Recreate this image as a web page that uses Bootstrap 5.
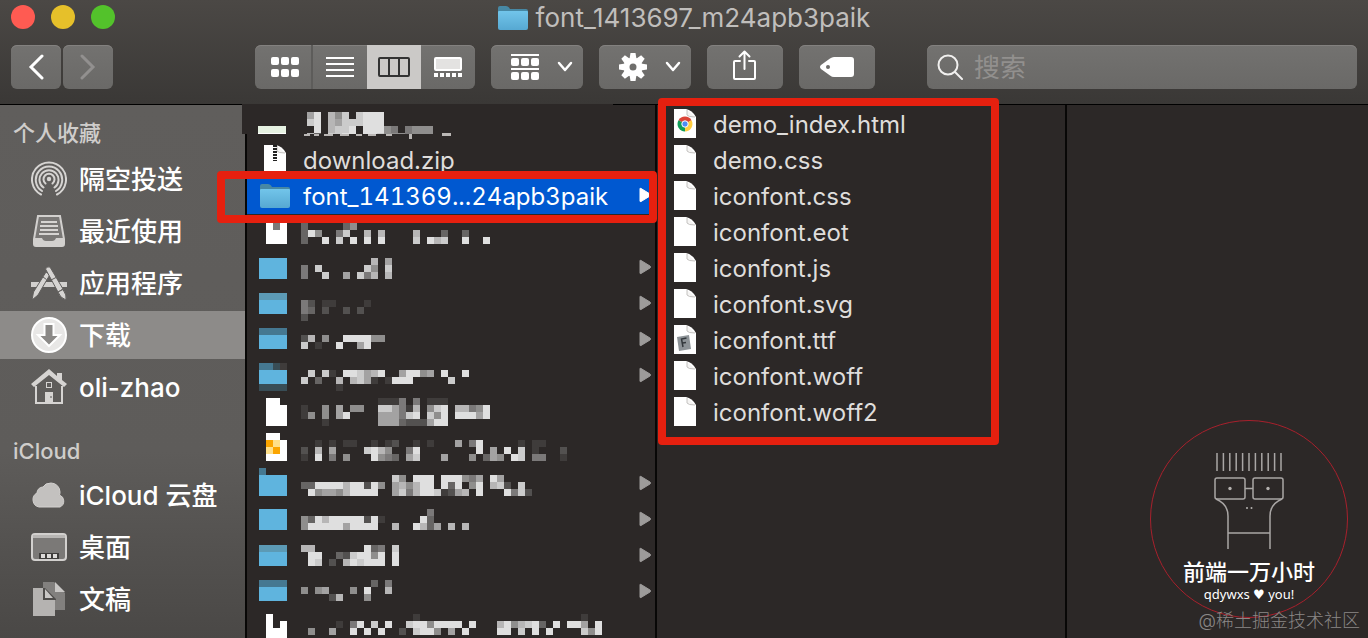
<!DOCTYPE html>
<html lang="zh-CN">
<head>
<meta charset="utf-8">
<meta name="viewport" content="width=device-width, initial-scale=1">
<title>font_1413697_m24apb3paik</title>
<link href="https://cdn.jsdelivr.net/npm/bootstrap@5.3.0/dist/css/bootstrap.min.css" rel="stylesheet">
<style>
  :root { --pane: #2c2827; --ink: #dfdddb; --mark-red: #e6200f; }
  body { font-family: Inter, "Noto Sans CJK SC", sans-serif; background: var(--pane); color: var(--ink); font-size: 24px; line-height: 36px; }
  svg { display: block; flex: none; }
  .chrome { background: linear-gradient(#4b4845, #3a3836); border-bottom: 1px solid #000; height: 105px; flex: none; padding: 0 11px; }
  .title-row { display: grid; grid-template-columns: 1fr auto 1fr; height: 35px; margin-bottom: 10px; }
  .lights { display: flex; gap: 16px; padding-top: 5px; }
  .light-dot { width: 24px; height: 24px; border-radius: 50%; border: 0; padding: 0; }
  .window-name { color: #c0bebc; font-size: 26px; font-weight: 400; margin: 0; line-height: 36px; }
  .tool { height: 44px; flex: none; border: 0; border-radius: 6px; padding: 0; color: #fff; background: linear-gradient(#737270, #6a6967); box-shadow: inset 0 1px #83817f; display: flex; align-items: center; justify-content: center; }
  .tool-nav { width: 50px; }
  .tool-menu { width: 92px; gap: 18px; padding-left: 10px; }
  .tool-wide { width: 76px; }
  .views { display: grid; grid-template-columns: 58px 1fr 1fr 1fr; width: 220px; margin-left: 126px; overflow: hidden; }
  .views button { height: 44px; border: 0; background: none; color: #fff; padding: 0; display: flex; align-items: center; justify-content: center; }
  .views button:first-child { border-right: 2px solid #5d5c5a; padding-left: 3px; }
  .views .chosen { background: #cbc9c7; color: #333; }
  .finder-search { flex: 1; min-width: 0; margin-left: 36px; padding: 0 10px; justify-content: flex-start; gap: 11px; }
  .finder-search input { background: none; border: 0; outline: 0; color: #fff; font-size: 26px; line-height: 36px; padding: 2px 0 0; width: 0; }
  .finder-search input::placeholder { color: #92908e; opacity: 1; }
  .side { width: 247px; flex: none; background: linear-gradient(#605e5c 0, #5e5c5a 65%, #4a4846 100%); border-right: 2px solid #080706; font-weight: 500; }
  .side h2 { font-size: 22px; line-height: 32px; font-weight: 500; color: #cfcdcb; margin: 0; padding: 12px 13px 4px; }
  .side ul + h2 { padding-top: 20px; padding-bottom: 2px; }
  .side a { display: flex; align-items: center; gap: 12px; height: 48px; margin: 2px 0 4px; padding-left: 31px; color: #fff; text-decoration: none; font-size: 26px; line-height: 48px; white-space: nowrap; }
  .side a span { padding-top: 2px; }
  .side .picked { background: #8d8b89; }
  .browse-col { width: 410px; flex: none; border-right: 2px solid #080706; padding-top: 1px; }
  .file-row { display: flex; align-items: center; height: 36px; position: relative; white-space: nowrap; color: inherit; text-decoration: none; padding-left: 12px; }
  .doc-icon { margin: 0 16px 2px 5px; }
  .folder-icon { margin: 0 13px 0 1px; }
  .row-name { flex: 1; padding-top: 2px; }
  .sel-row { background: #0058d0; color: #fff; font-variant-numeric: tabular-nums; }
  .arrow { color: #9d9b9a; margin: 0 4px 2px 0; }
  .sel-row .arrow { color: #fff; }
  .outline-mark { position: absolute; border: 8px solid var(--mark-red); border-radius: 4px; z-index: 5; pointer-events: none; }
  .mark-row { inset: -7px -2px -9px -30px; }
  .mark-list { inset: -8px 66px -15px 1px; }
  .cover { position: absolute; left: 242px; top: 104px; width: 371px; height: 30px; background: var(--pane); z-index: 1; }
  .cover svg { margin-left: 16px; }
  .emblem { position: absolute; right: 20px; bottom: 20px; width: 198px; height: 198px; border: 1px solid #a8202c; border-radius: 50%; text-align: center; color: #fff; padding-top: 31px; }
  .emblem svg { margin: 0 auto 6px; }
  .emblem-name { font-size: 22px; line-height: 28px; font-weight: 500; font-family: "Noto Sans CJK SC", sans-serif; }
  .emblem-sub { font-size: 13px; line-height: 20px; font-family: "Noto Sans", "DejaVu Sans", sans-serif; }
  .credit { position: absolute; right: 8px; bottom: 5px; font-size: 18px; line-height: 24px; font-weight: 300; color: #8a8786; white-space: nowrap; }
</style>
</head>
<body>
<svg width="0" height="0" class="position-absolute" aria-hidden="true">
  <defs>
    <linearGradient id="blue" x1="0" y1="0" x2="0" y2="1"><stop offset="0" stop-color="#72c5ea"/><stop offset="1" stop-color="#56a8d2"/></linearGradient>
    <symbol id="folder" viewBox="0 0 30 24"><path d="M0 22V2Q0 0 2 0H8Q10 0 11 1.500L12 3H28Q30 3 30 5V22Z" fill="#4788a4"/><path d="M0 6Q0 5 1 5H29Q30 5 30 6V22Q30 24 28 24H2Q0 24 0 22Z" fill="url(#blue)"/></symbol>
    <symbol id="page" viewBox="0 0 22 29"><path d="M0 0H12Q18 1 22 8V29H0Z" fill="#fff"/><path d="M13 1V6Q14 8 21 8" fill="#f5f4f3" stroke="#c4c2c0" stroke-width="1"/></symbol>
    <symbol id="arrow" viewBox="0 0 12 16"><path d="M1 1.500Q1 1 2 1.500L11 7Q12 8 11 9L2 14.500Q1 15 1 14Z" fill="currentColor" stroke="currentColor"/></symbol>
    <symbol id="chev" viewBox="0 0 16 12"><path d="M2 2L8 9L14 2" fill="none" stroke="currentColor" stroke-width="2.500" stroke-linecap="round" stroke-linejoin="round"/></symbol>
  </defs>
</svg>

<div class="d-flex flex-column vh-100 overflow-hidden position-relative">
  <header class="chrome">
    <div class="title-row">
      <div class="lights">
        <button class="light-dot" style="background:#ff5b52" aria-label="关闭"></button>
        <button class="light-dot" style="background:#e6c02a" aria-label="最小化"></button>
        <button class="light-dot" style="background:#53c22b" aria-label="缩放"></button>
      </div>
      <div class="d-flex align-items-center gap-2">
        <svg width="30" height="24"><use href="#folder"/></svg>
        <h1 class="window-name">font_1413697_m24apb3paik</h1>
      </div>
      <div></div>
    </div>
    <div class="d-flex gap-3">
      <div class="d-flex" style="gap:2px">
        <button class="tool tool-nav" aria-label="后退"><svg width="16" height="26" viewBox="0 0 16 26" fill="none" stroke="#fff" stroke-width="3" stroke-linecap="round"><path d="M14 2L3 13L14 24"/></svg></button>
        <button class="tool tool-nav" aria-label="前进"><svg width="16" height="26" viewBox="0 0 16 26" fill="none" stroke="#92908f" stroke-width="3" stroke-linecap="round"><path d="M2 2L13 13L2 24"/></svg></button>
      </div>
      <div class="tool views">
        <button aria-label="图标"><svg width="28" height="20" viewBox="0 0 28 20" fill="currentColor"><rect width="8" height="8" rx="2"/><rect x="10" width="8" height="8" rx="2"/><rect x="20" width="8" height="8" rx="2"/><rect y="12" width="8" height="8" rx="2"/><rect x="10" y="12" width="8" height="8" rx="2"/><rect x="20" y="12" width="8" height="8" rx="2"/></svg></button>
        <button aria-label="列表"><svg width="28" height="20" viewBox="0 0 28 20" fill="currentColor"><path d="M0 0H28V2H0ZM0 6H28V8H0ZM0 12H28V14H0ZM0 18H28V20H0Z"/></svg></button>
        <button class="chosen" aria-label="分栏"><svg width="32" height="20" viewBox="0 0 32 20" fill="none" stroke="currentColor" stroke-width="2"><rect x="1" y="1" width="30" height="18" rx="1"/><path d="M11 1V19M21 1V19"/></svg></button>
        <button aria-label="画廊"><svg width="28" height="20" viewBox="0 0 28 20"><rect x="1" y="1" width="26" height="12" rx="1" fill="#e3e2e1" stroke="#fff" stroke-width="2"/><path d="M0 16H4V20H0ZM6 16H10V20H6ZM12 16H16V20H12ZM18 16H22V20H18ZM24 16H28V20H24Z" fill="#fff"/></svg></button>
      </div>
      <button class="tool tool-menu" aria-label="分组"><svg width="28" height="26" viewBox="0 0 28 26" fill="#fff"><path d="M0 0H28V2H0ZM0 14H28V16H0Z"/><rect y="4" width="8" height="8" rx="2"/><rect x="10" y="4" width="8" height="8" rx="2"/><rect x="20" y="4" width="8" height="8" rx="2"/><rect y="18" width="8" height="8" rx="2"/><rect x="10" y="18" width="8" height="8" rx="2"/><rect x="20" y="18" width="8" height="8" rx="2"/></svg><svg width="16" height="12"><use href="#chev"/></svg></button>
      <button class="tool tool-menu" aria-label="操作"><svg width="28" height="28" viewBox="-14 -14 28 28"><g fill="#fff"><path id="cog" d="M-2.500 -14H2.500L3.500 -8H-3.500Z"/><use href="#cog" transform="rotate(45)"/><use href="#cog" transform="rotate(90)"/><use href="#cog" transform="rotate(135)"/><use href="#cog" transform="rotate(180)"/><use href="#cog" transform="rotate(225)"/><use href="#cog" transform="rotate(270)"/><use href="#cog" transform="rotate(315)"/></g><circle r="6.500" fill="none" stroke="#fff" stroke-width="6"/></svg><svg width="16" height="12"><use href="#chev"/></svg></button>
      <button class="tool tool-wide" aria-label="共享"><svg class="mb-1" width="24" height="30" viewBox="0 0 24 30" fill="none" stroke="#fff" stroke-width="2" stroke-linecap="round" stroke-linejoin="round"><path d="M7 11H2Q1 11 1 12V28Q1 29 2 29H21Q22 29 22 28V12Q22 11 21 11H16M11.500 19V1.500M6.500 6.500L11.500 1.500L16.500 6.500"/></svg></button>
      <button class="tool tool-wide" aria-label="标记"><svg width="34" height="20" viewBox="0 0 34 20"><path d="M10 1.500Q12 0 14 0H31Q34 0 34 3V17Q34 20 31 20H14Q12 20 10 18.500L1 12Q-1 10 1 8Z" fill="#fff"/><circle cx="8" cy="10" r="2" fill="#6d6c6a"/></svg></button>
      <label class="tool finder-search">
        <svg width="26" height="26" viewBox="0 0 26 26" fill="none" stroke="#f1f0ef" stroke-width="2" stroke-linecap="round"><circle cx="11" cy="11" r="9.500"/><path d="M18 18L25 25"/></svg>
        <input class="flex-grow-1" type="text" placeholder="搜索" aria-label="搜索">
      </label>
    </div>
  </header>

  <div class="cover"><svg data-cells="first" width="200" height="36"></svg></div>

  <main class="d-flex flex-grow-1" style="min-height:0">
    <nav class="side">
      <h2>个人收藏</h2>
      <ul class="list-unstyled m-0">
        <li><a href="#"><svg width="36" height="36" viewBox="0 0 36 36" fill="none" stroke="#d6d4d2" stroke-width="2" stroke-linecap="round"><circle cx="18" cy="18" r="2.200" fill="#d6d4d2" stroke="none"/><path d="M14.500 22.500A5.500 5.500 0 1 1 21.500 22.500M12.500 26.500A9.500 9.500 0 1 1 23.500 26.500M11 30A13.200 13.200 0 1 1 25 30M10 33.500A17 17 0 1 1 26 33.500"/></svg><span>隔空投送</span></a></li>
        <li><a href="#"><svg width="36" height="36" viewBox="0 0 36 36"><path d="M7 3H29L33 26V31Q33 33 31 33H5Q3 33 3 31V26Z" fill="#7a7876" stroke="#d2d0ce" stroke-width="2"/><path d="M10 9H26M9 13H27M9 17H27M8 21H28" stroke="#d6d4d2" stroke-width="2"/><path d="M3 25H11Q12 28 15 28H21Q24 28 25 25H33V32Q33 33 31 33H5Q3 33 3 31Z" fill="#d2d0ce"/></svg><span>最近使用</span></a></li>
        <li><a href="#"><svg width="36" height="36" viewBox="0 0 36 36"><path d="M0 17H36V22H0Z" fill="#d2d0ce"/><g stroke="#605e5c" stroke-width="1" fill="#d6d4d2"><path d="M15 7L19 9.500L7 30L1 35L2.500 27Z"/><path d="M14.500 4Q16 1 19 2L32 24L27 27Z"/><path d="M27 27L32 24.500Q36 30 35 35Q29 33 27 27Z"/></g><path d="M12 12L15.500 14.500M20 15L25 12.500" stroke="#605e5c"/></svg><span>应用程序</span></a></li>
        <li><a href="#" class="picked"><svg width="36" height="36" viewBox="0 0 36 36"><circle cx="18" cy="18" r="17" fill="#e8e7e6" stroke="#fff" stroke-width="2"/><path d="M13.500 7H22.500V18H29L18 29L7 18H13.500Z" fill="#8b8987" stroke="#fff" stroke-width="2"/></svg><span>下载</span></a></li>
        <li><a href="#"><svg width="36" height="36" viewBox="0 0 36 36"><path d="M5 17V34H31V17" fill="none" stroke="#d6d4d2" stroke-width="2"/><path d="M18 0L26 7V4H31V11L36 15L33 18L18 6L3 18L0 15Z" fill="#d6d4d2"/><path d="M14 23H22V34H14Z" fill="#d6d4d2"/><rect x="15.500" y="13.500" width="5" height="5" fill="none" stroke="#d6d4d2"/><path d="M20 27V29" stroke="#555"/></svg><span>oli-zhao</span></a></li>
      </ul>
      <h2>iCloud</h2>
      <ul class="list-unstyled m-0">
        <li><a href="#"><svg width="36" height="36" viewBox="0 0 36 36"><path d="M8 30A7.500 7.500 0 0 1 6 16A6 6 0 0 1 12 10Q14 6 20 6A9 9 0 0 1 29 15Q29 17 28.500 18A6.500 6.500 0 0 1 29 30Z" fill="#c3c1bf" stroke="#d2d0ce"/></svg><span>iCloud 云盘</span></a></li>
        <li><a href="#"><svg width="36" height="36" viewBox="0 0 36 36"><rect x="1" y="5" width="34" height="26" rx="3" fill="#7b7977" stroke="#d2d0ce" stroke-width="2"/><path d="M2 6H34V9H2Z" fill="#b8b6b4"/><path d="M8 24H28V30H8Z" fill="#3f3d3b"/><path d="M10 25H14V29H10ZM16 25H20V29H16ZM22 25H26V29H22Z" fill="#dddbd9"/></svg><span>桌面</span></a></li>
        <li><a href="#"><svg width="36" height="36" viewBox="0 0 36 36"><path d="M12 1H23L34 12V29H12Z" fill="#82807e"/><path d="M24 1L34 11H24Z" fill="#c9c7c5"/><path d="M2 7H13L24 18V35H2Z" fill="#b5b3b1"/><path d="M12 7H14L25 18V19H12Z" fill="#4e4c4a"/><path d="M14 8L22 17H14Z" fill="#c9c7c5"/></svg><span>文稿</span></a></li>
      </ul>
    </nav>

    <section class="browse-col">
      <ul class="list-unstyled m-0" id="downloads">
        <li class="file-row"></li>
        <li class="file-row" style="z-index:2"><svg class="doc-icon" width="23" height="29" viewBox="0 0 23 29"><use href="#page" width="22" height="29"/><path d="M11 0V16" stroke="#222" stroke-width="4" stroke-dasharray="2 1"/></svg><span class="row-name">download.zip</span></li>
        <li><a href="#" class="file-row sel-row"><svg width="30" height="24" class="folder-icon"><use href="#folder"/></svg><span class="row-name">font_141369...24apb3paik</span><svg class="arrow" width="12" height="16"><use href="#arrow"/></svg><span class="outline-mark mark-row"></span></a></li>
      </ul>
    </section>

    <section class="browse-col">
      <ul class="list-unstyled m-0 position-relative" id="fonts">
        <li class="outline-mark mark-list" aria-hidden="true"></li>
      </ul>
    </section>

    <section class="flex-grow-1 position-relative">
      <div class="emblem">
        <svg width="72" height="98" viewBox="0 0 72 98" fill="none" stroke="#a9a6a5" stroke-width="1.500"><path d="M4 1V19M10.400 1V19M16.800 1V19M23.200 1V19M29.600 1V19M36 1V19M42.400 1V19M48.800 1V19M55.200 1V19M61.600 1V19M68 1V19"/><rect x="2" y="26" width="30" height="21" rx="2"/><rect x="40" y="26" width="30" height="21" rx="2"/><path d="M32 36.500H40M3 47Q15 52 15 64V97M69 47Q57 52 57 64V97M15 81H57"/><g fill="#b5b2b0" stroke="none"><circle cx="17" cy="36.500" r="1.700"/><circle cx="55" cy="36.500" r="1.700"/><circle cx="34" cy="56" r="1"/><circle cx="38.500" cy="56" r="1"/></g></svg>
        <div class="emblem-name">前端一万小时</div>
        <div class="emblem-sub">qdywxs ♥ you!</div>
      </div>
      <div class="credit">@稀土掘金技术社区</div>
    </section>
  </main>
</div>

<script src="https://cdn.jsdelivr.net/npm/bootstrap@5.3.0/dist/js/bootstrap.bundle.min.js"></script>
<script>
  // Colour keys of the pixelated names: 1-9 are greys, letters are icon colours.
  const tint = { w: '#ffffff', b: '#5fb4de', t: '#5c9ab5', d: '#457891', e: '#384d56', o: '#fba500', y: '#ffe08a', g: '#e6f2e2' };
  const CELL = 7;
  const shade = k => tint[k] || `rgb(${[43, 40, 39].map(v => Math.round(v + (223 - v) * k / 9)).join()})`;
  function mosaic(svg, top, lines) {
    svg.innerHTML = lines.map((line, r) => [...line].map((k, c) => k === '.' ? '' :
      `<rect x="${c * CELL}" y="${top + r * CELL}" width="${CELL}" height="${CELL}" fill="${shade(k)}" shape-rendering="crispEdges"/>`).join('')).join('');
  }
  // Each hidden row: first cell line's offset, whether it opens a folder, cell lines.
  const hidden = [
    [9, 0, ['.w4w..3.....35', '.www..395..48..7.7....7...3..3', '.www..3..9.8.9.9.9....8.978..9..9']],
    [8, 1, ['bbbb............7.6', 'bbbb..4.8......85.8', 'bbbb..4..8..6.847.7']],
    [7, 1, ['tttt', 'bbbb..42.11....1', 'bbbb..43.2..2.2', '......2']],
    [6, 1, ['dddd', 'bbbb..27.5..999955', 'bbbb..8.1..9..69']],
    [5, 1, ['dde1', 'bbbb...8.81.998679..69956.9..9', 'bbbb..8.3..7.7861.1999.....8', 'eeee.......1']],
    [4, 0, ['.ww..............1114.4.111', '.www..1..5.6.55..886417.589.77459', '.www..15.5.69....666489.859.99969', '.www.....1.......6663222699']],
    [3, 0, ['.ww', '.oyw....1.1.11..1.12..1.1...6.49.....1.11', '.yow..2.7.6....8975..49........9.6.9.8.1...2', '.www..1.9.4.5...9543.68...6...5.365.98.44..1']],
    [2, 1, ['d', 'bbbb...............85.999.999546.96', 'bbbb..339999799295.675799.939.59.782.8', 'bbbb...9566579999..68479981267.9...9482']],
    [7, 1, ['bbbb....................4', 'bbbb..539799999291.....93', 'bbbb..59999969999..7..9736.7.7']],
    [7, 1, ['tttt..77.......934.8', 'bbbb...99..3289959.9', 'bbbb...98.2.798999.9']],
    [6, 1, ['dddd............3.4', 'bbbb..5.56...5.9..7', 'bbbb......27...5']],
    [4, 0, ['.w....................1.......................1', '.w.w.......1.49.8.9..89959999.9...7957893.9.996.9', '.www...5..6..9.9.9..2.8995.6.9....99.8.9.9....859', '.www']]
  ];
  const downloads = document.getElementById('downloads');
  for (const [top, folder, lines] of hidden) {
    const li = document.createElement('li');
    li.className = 'file-row';
    li.innerHTML = '<svg width="350" height="36"></svg><span class="row-name"></span>' +
      (folder ? '<svg class="arrow" width="12" height="16"><use href="#arrow"/></svg>' : '');
    mosaic(li.firstChild, top, lines);
    downloads.append(li);
  }
  const first = document.querySelector('[data-cells=first]');
  mosaic(first, 8, ['.......69.758.8999', '.......89.76888999', 'gggg....9.7889.99954.4555', 'wwww...73.8899.9985554555']);
  first.insertAdjacentHTML('beforeend', '<path fill="#2c2827" d="M0 30H190V36H0Z"/><path d="M46 30h6v2h-6zM56 30h5v2h-5zM66 30h9v2h-9zM82 30h9v2h-9zM98 30h6v2h-6zM110 30h8v2h-8zM128 30h6v2h-6zM151 30h3v5h-3zM184 29h9v3h-9z" fill="#bab7b5"/>');

  const badge = {
    'demo_index.html': '<g transform="translate(11 15)"><circle r="7.500" fill="#fff"/><path d="M0 0L-6.500 -3.700A7.500 7.500 0 0 1 6.500 -3.700Z" fill="#db4437"/><path d="M0 0L6.500 -3.700A7.500 7.500 0 0 1 0 7.500Z" fill="#ffcd40"/><path d="M0 0L0 7.500A7.500 7.500 0 0 1 -6.500 -3.700Z" fill="#0f9d58"/><circle r="3.200" fill="#4c8bf5" stroke="#fff"/></g>',
    'iconfont.ttf': '<path d="M3 12L15 10L17 24L5 26Z" fill="#8d9397"/><path d="M9 22L7.500 14L12.500 13M8.500 18L12 17.500" fill="none" stroke="#33383c" stroke-width="1.500"/>'
  };
  const fonts = document.getElementById('fonts');
  for (const name of ['demo_index.html', 'demo.css', 'iconfont.css', 'iconfont.eot', 'iconfont.js', 'iconfont.svg', 'iconfont.ttf', 'iconfont.woff', 'iconfont.woff2']) {
    fonts.insertAdjacentHTML('beforeend', `<li><a href="#" class="file-row"><svg class="doc-icon" width="23" height="29" viewBox="0 0 23 29"><use href="#page" width="22" height="29"/>${badge[name] || ''}</svg><span class="row-name">${name}</span></a></li>`);
  }
</script>
</body>
</html>
